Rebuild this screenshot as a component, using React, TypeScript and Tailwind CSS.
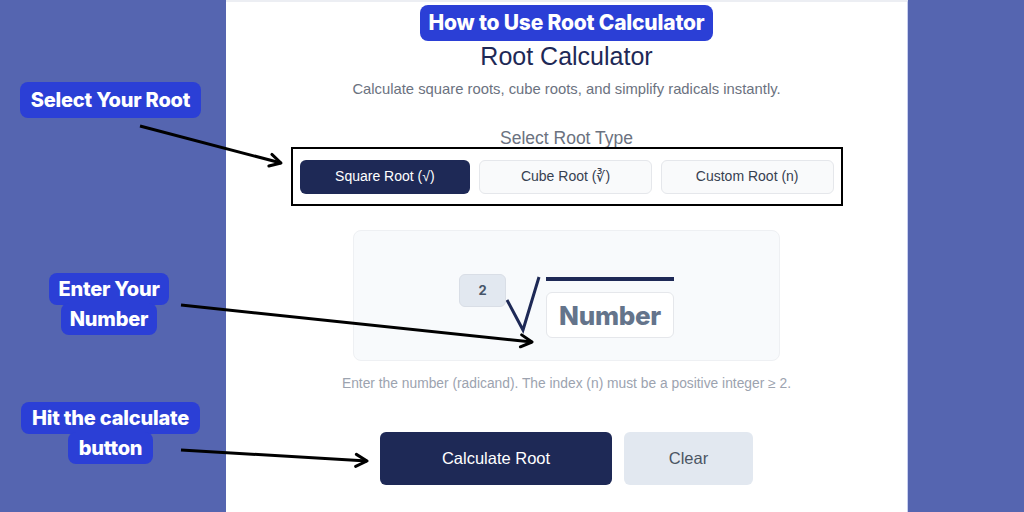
import React from 'react';

const label = "bg-[#2b3fd6] text-white font-extrabold text-[20px] leading-[30px] px-[9px] py-[4px] rounded-lg [box-decoration-break:clone] [-webkit-box-decoration-break:clone]";

const tabs = ['Square Root (√)', 'Cube Root (∛)', 'Custom Root (n)'];

export default function App() {
  return (
    <div className="relative w-[1024px] h-[512px] overflow-hidden flex bg-[#5565b0] font-['Liberation_Sans',sans-serif]">
      {/* left notes */}
      <div className="w-[226px] shrink-0 font-['Inter',sans-serif] tracking-[-0.2px]">
        <div className="w-[221px] text-center pt-[85px]">
          <span className={label + ' py-[6px] px-[11px]'}>Select Your Root</span>
        </div>
        <div className="w-[218px] text-center mt-[159px]">
          <span className={label}>
            Enter Your
            <br />
            Number
          </span>
        </div>
        <div className="w-[221px] text-center mt-[69px]">
          <span className={label + ' px-[11px]'}>
            Hit the calculate
            <br />
            button
          </span>
        </div>
      </div>

      {/* calculator panel */}
      <div className="w-[682px] shrink-0 bg-white border-t-2 border-[#eceef3] border-r border-r-[#c9d0f0] flex flex-col items-center">
        <div className="mt-[3px] h-[36px] px-[9px] flex items-center rounded-lg bg-[#2b3fd6] text-white font-['Inter',sans-serif] font-extrabold text-[21px] tracking-[-0.2px]">
          How to Use Root Calculator
        </div>
        <h1 className="mt-[1px] text-[25px] leading-[28px] text-[#1e2956]">Root Calculator</h1>
        <p className="mt-[10px] text-[14.8px] leading-[18px] text-[#6b7280]">
          Calculate square roots, cube roots, and simplify radicals instantly.
        </p>
        <p className="mt-[30px] text-[17.5px] leading-[20px] text-[#6b7280]">Select Root Type</p>

        <div className="mt-[-1px] w-[552px] h-[59px] border-2 border-black flex items-center gap-[9px] px-[7px]">
          {tabs.map((t, i) => (
            <button
              key={t}
              className={
                i === 0
                  ? 'flex-1 h-[34px] rounded-md bg-[#1e2956] text-white text-[14px]'
                  : 'flex-1 h-[34px] rounded-md bg-[#f9fafb] border border-[#e5e7eb] text-[#374151] text-[14px]'
              }
            >
              {t}
            </button>
          ))}
        </div>

        <div className="mt-[24px] w-[427px] h-[131px] rounded-lg bg-[#f8fafc] border border-[#eef0f3] flex justify-center pt-[43px]">
          <div className="flex items-start">
            <div className="w-[47px] h-[33px] rounded-md bg-[#e2e8f0] border border-[#d9dee6] flex items-center justify-center font-['Inter',sans-serif] font-bold text-[13px] text-[#475569]">
              2
            </div>
            <svg width="40" height="60" viewBox="0 0 40 60" className="mt-[2px]">
              <path d="M1 24 L17 54 L33 1" fill="none" stroke="#1e2956" strokeWidth="3" />
            </svg>
            <div className="flex flex-col">
              <div className="w-[128px] h-[4px] bg-[#1e2956] mt-[3px]" />
              <input
                placeholder="Number"
                className="mt-[11px] w-[128px] h-[46px] rounded-md bg-white border border-[#e5e7eb] text-center font-['Inter',sans-serif] font-extrabold text-[26px] tracking-[-0.3px] placeholder:text-[#64748b] outline-none"
              />
            </div>
          </div>
        </div>

        <p className="mt-[15px] text-[13.8px] leading-[16px] text-[#9ca3af]">
          Enter the number (radicand). The index (n) must be a positive integer ≥ 2.
        </p>

        <div className="mt-[40px] flex gap-3">
          <button className="w-[232px] h-[53px] rounded-md bg-[#1e2956] text-white text-[16.5px]">Calculate Root</button>
          <button className="w-[129px] h-[53px] rounded-md bg-[#e2e8f0] text-[#4b5563] text-[16.5px]">Clear</button>
        </div>
      </div>

      <div className="flex-1" />

      {/* arrows */}
      <svg className="absolute inset-0 pointer-events-none" width="1024" height="512">
        <defs>
          <marker id="head" markerUnits="userSpaceOnUse" markerWidth="16" markerHeight="16" refX="13" refY="8" orient="auto">
            <path d="M2 2 L13 8 L2 14" fill="none" stroke="#000" strokeWidth="3" strokeLinecap="round" strokeLinejoin="round" />
          </marker>
        </defs>
        <line x1="140" y1="126" x2="281" y2="163" stroke="#000" strokeWidth="3" markerEnd="url(#head)" />
        <line x1="181" y1="305" x2="532" y2="342" stroke="#000" strokeWidth="3" markerEnd="url(#head)" />
        <line x1="181" y1="450" x2="367" y2="461" stroke="#000" strokeWidth="3" markerEnd="url(#head)" />
      </svg>
    </div>
  );
}
